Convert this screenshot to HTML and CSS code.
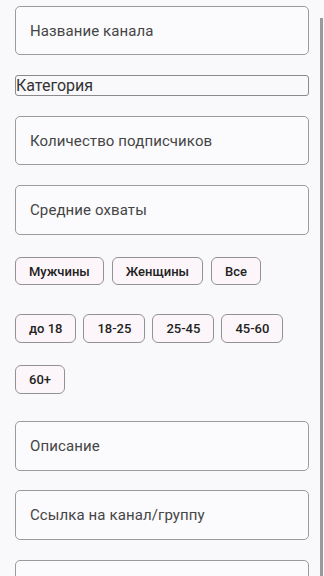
FILE: index.html
```html
<!DOCTYPE html>
<html lang="ru">
<head>
<meta charset="utf-8">
<link rel="stylesheet" href="styles.css">
</head>
<body>
<div class="form">
  <div class="field f-name">Название канала</div>
  <div class="select">Категория</div>
  <div class="field f-subs">Количество подписчиков</div>
  <div class="field f-reach">Средние охваты</div>
  <div class="chips c-gender">
    <span class="chip">Мужчины</span>
    <span class="chip">Женщины</span>
    <span class="chip">Все</span>
  </div>
  <div class="chips c-age">
    <span class="chip">до 18</span>
    <span class="chip">18-25</span>
    <span class="chip">25-45</span>
    <span class="chip">45-60</span>
  </div>
  <div class="chips c-age2">
    <span class="chip">60+</span>
  </div>
  <div class="field f-desc">Описание</div>
  <div class="field f-link">Ссылка на канал/группу</div>
  <div class="field f-next"></div>
</div>
<div class="scrollbar"></div>
</body>
</html>
```
FILE: styles.css
```css
html, body {
  margin: 0;
  padding: 0;
  height: 576px;
  overflow: hidden;
  background: #f9f9fb;
  font-family: Roboto, "Noto Sans", sans-serif;
}
.form {
  padding: 6px 15px 0 15px;
  display: flex;
  flex-direction: column;
}
.field {
  box-sizing: border-box;
  height: 49px;
  border: 1px solid #9b9b9d;
  border-radius: 5px;
  background: #fbfbfd;
  padding-left: 14px;
  display: flex;
  align-items: center;
  font-size: 15px;
  color: #454545;
  letter-spacing: 0.1px;
}
.f-name { margin-bottom: 20px; }
.select {
  box-sizing: border-box;
  height: 21px;
  border: 1px solid #8a8a8c;
  border-radius: 3px;
  font-size: 16px;
  line-height: 19px;
  color: #333;
  margin-bottom: 20px;
}
.f-subs { margin-bottom: 20px; }
.f-reach { margin-bottom: 22px; height: 50px; }
.chips {
  display: flex;
  gap: 8px;
}
.c-gender { margin-bottom: 29px; }
.c-age { margin-bottom: 22px; gap: 7px; }
.c-age2 { margin-bottom: 27px; }
.chip {
  box-sizing: border-box;
  height: 28px;
  border: 1px solid #929294;
  border-radius: 6px;
  background: #fcf6fa;
  padding: 0 13px;
  display: flex;
  align-items: center;
  justify-content: center;
  font-size: 13px;
  font-weight: 500;
  color: #222;
}
.c-age .chip, .c-age2 .chip { height: 29px; }
.f-desc { margin-bottom: 19px; height: 50px; }
.f-link { margin-bottom: 20px; height: 50px; }
.scrollbar {
  position: absolute;
  top: 18px;
  right: 1px;
  width: 3px;
  height: 558px;
  background: #9a9a9c;
}
```
